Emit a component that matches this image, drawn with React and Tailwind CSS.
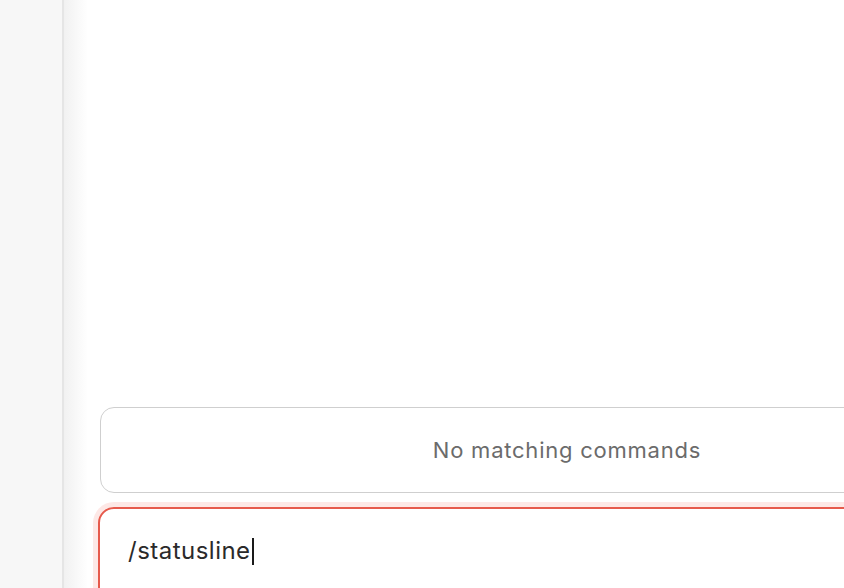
import React from 'react';

const Sidebar = () => (
  <aside className="w-[64px] shrink-0 h-full bg-[#f7f7f7] border-r-2 border-[#e5e5e5]" />
);

const CommandMenu = () => (
  <div className="w-[934px] h-[86px] shrink-0 flex items-center justify-center rounded-[14px] border border-[#cfcfcf] bg-white">
    <span className="text-[22px] tracking-[0.035em] text-[#6b6b6b]">No matching commands</span>
  </div>
);

const PromptInput = () => (
  <div className="w-[938px] h-[120px] shrink-0 -ml-[2px] mt-[14px] rounded-[16px] border-2 border-[#e65a4c] bg-white shadow-[0_0_0_5px_#fde8e6] pl-[28px] pt-[24px]">
    <div className="flex items-center text-[24px] leading-[36px] text-[#2a2a2a]">
      <span className="tracking-[0.02em]">/statusline</span>
      <span className="w-[2px] h-[27px] bg-[#1a1a1a] ml-[1px]" />
    </div>
  </div>
);

export default function App() {
  return (
    <div
      className="w-[844px] h-[588px] overflow-hidden flex bg-white"
      style={{ fontFamily: 'Inter, "Noto Sans", "Liberation Sans", sans-serif' }}
    >
      <Sidebar />
      <main className="flex-1 min-w-0 h-full flex flex-col pl-[36px] pt-[407px] bg-[linear-gradient(to_right,#f1f1f1,#ffffff_24px)]">
        <CommandMenu />
        <PromptInput />
      </main>
    </div>
  );
}
